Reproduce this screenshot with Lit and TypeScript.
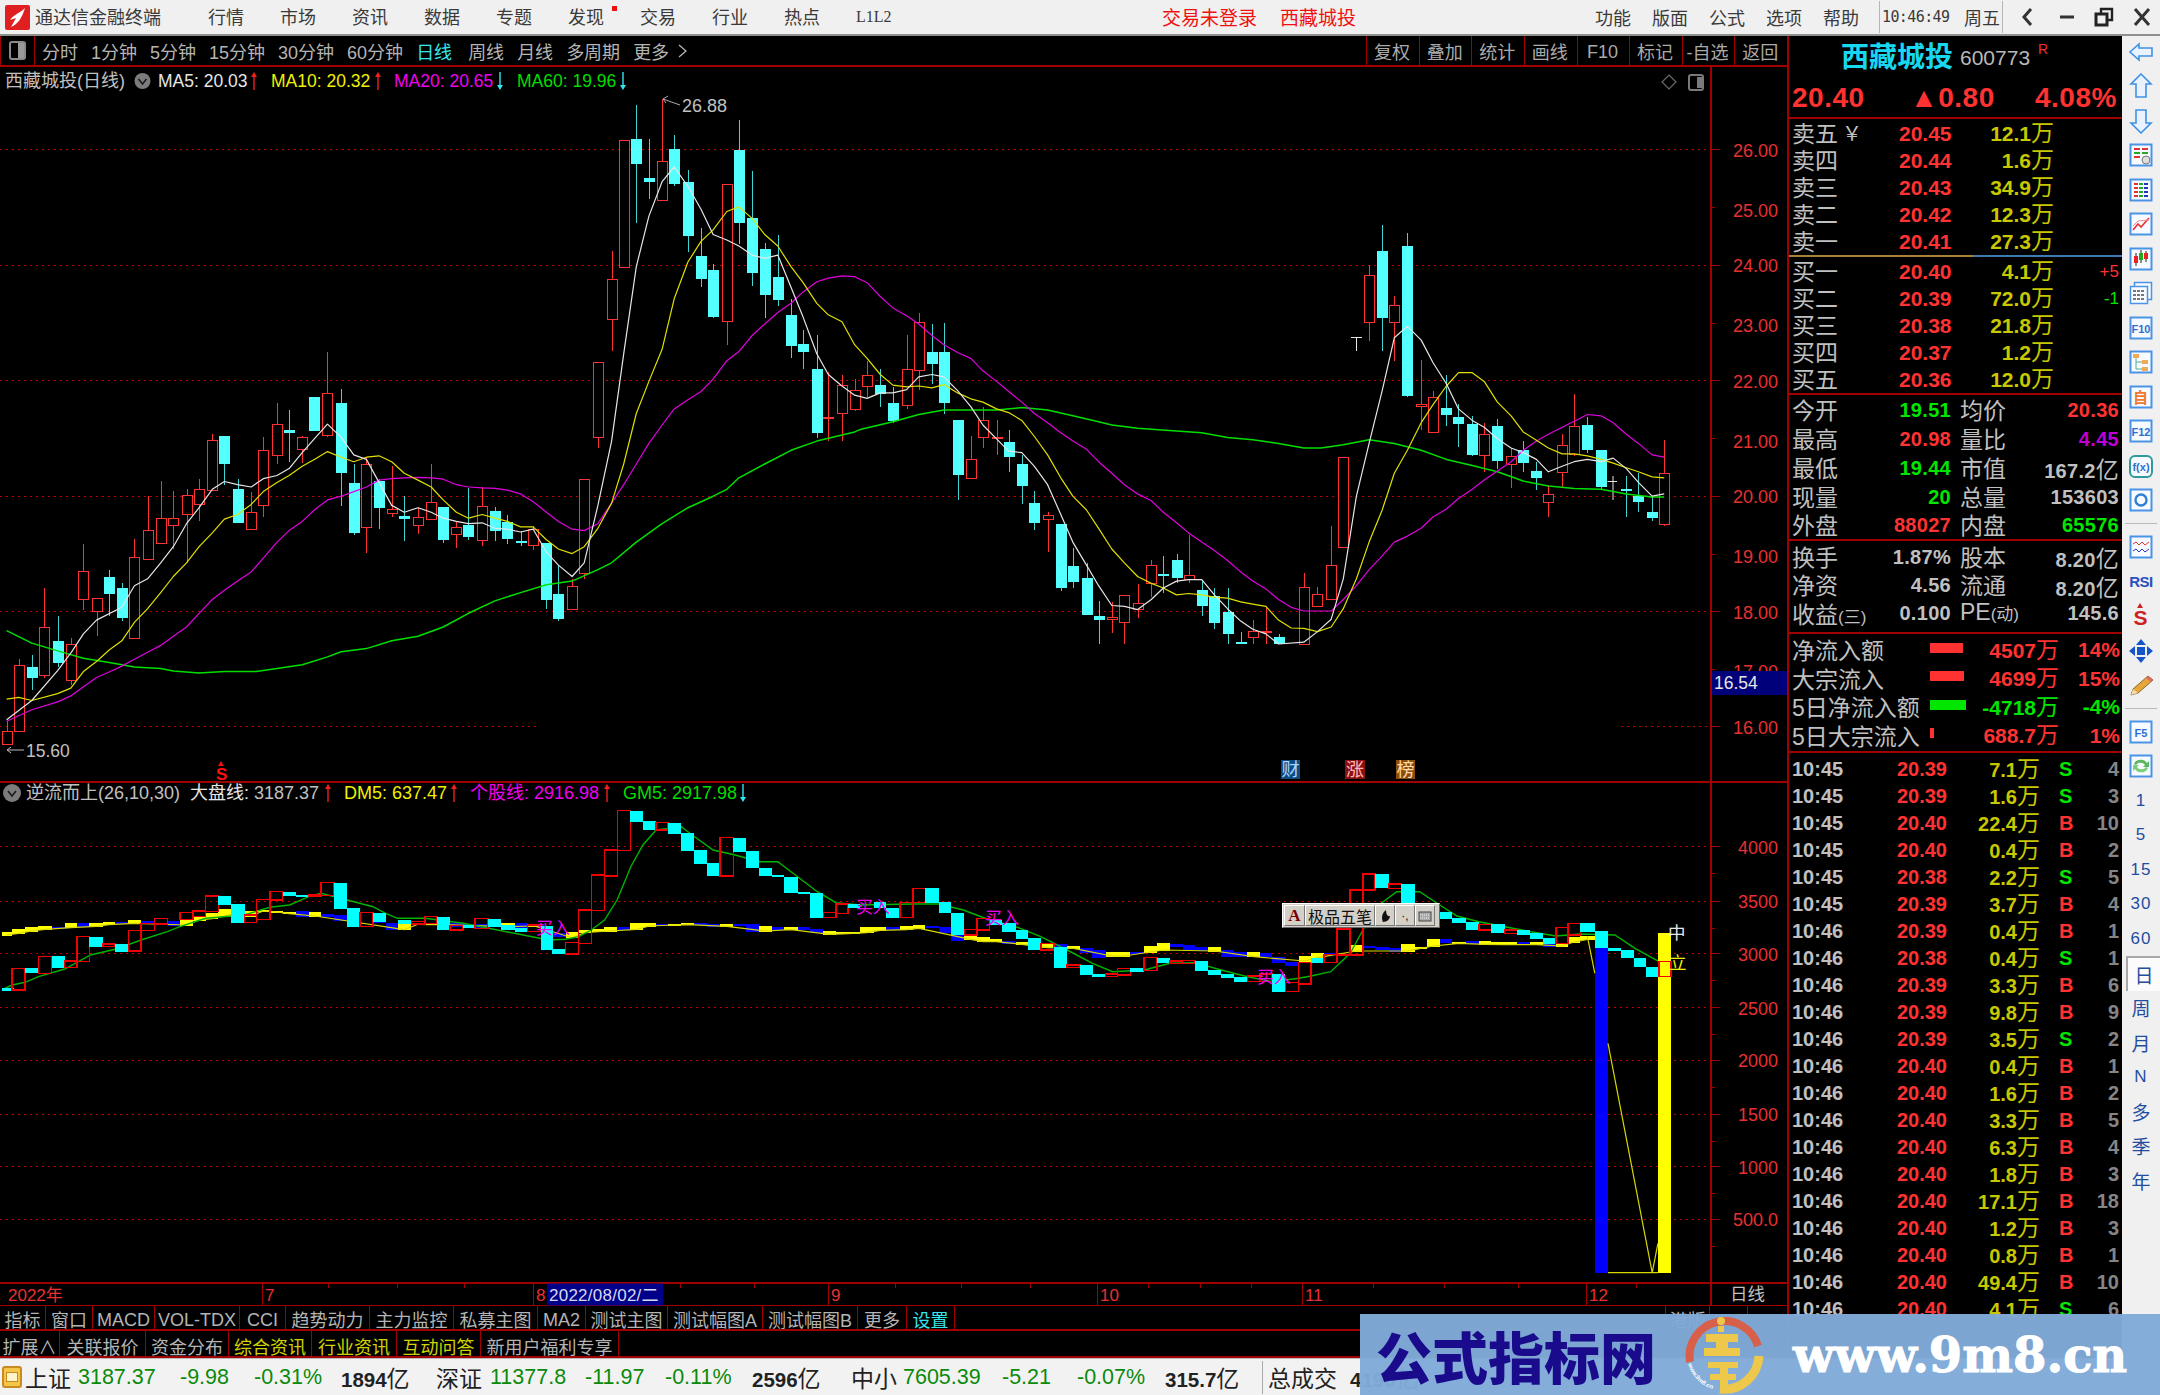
import { LitElement, html, css, svg } from "lit";
import { customElement } from "lit/decorators.js";

type N = number;
// coordinates were read from crops: helpers map them back to page pixels
const X7 = (x: N) => x / 1.823;
const X8 = (x: N) => 860 + x / 1.823;
const Y7 = (y: N) => 60 + y / 2.178;
const X9 = (x: N) => x / 1.823;
const X10 = (x: N) => 860 + x / 1.742;
const Y9 = (y: N) => 780 + y / 3;

const c7: N[][] = [
[12,1,1440,1462,1490,1490],[34,1,1305,1318,1462,1462],[58,0,1295,1323,1346,1372],[81,1,1150,1234,1338,1345],[105,0,1212,1265,1314,1322],[129,1,1258,1273,1352,1362],[152,1,1055,1112,1174,1198],[176,1,1172,1172,1200,1254],[199,0,1110,1125,1163,1210],[222,0,1140,1150,1215,1222],[245,1,1043,1083,1260,1260],[269,1,950,1024,1087,1087],[293,1,918,997,1051,1051],[316,1,938,997,1012,1065],[340,1,935,948,989,1095],[363,1,912,935,968,1005],[387,1,815,828,936,936],[409,0,820,820,882,925],[433,0,912,935,1008,1008],[458,1,940,984,1022,1022],[480,1,822,850,969,995],[505,1,748,793,860,880],[527,0,762,805,812,875],[551,1,820,822,848,878],[573,0,733,733,807,807],[597,1,637,726,818,822],[622,0,716,746,898,972],[645,0,880,922,1030,1035],[668,1,865,880,1018,1073],[691,0,912,918,977,1022],[714,1,885,978,987,995],[737,0,950,994,1000,1048],[762,1,975,995,1012,1032],[786,1,880,962,998,998],[808,0,974,974,1045,1052],[832,1,1005,1017,1033,1062],[854,0,933,1013,1040,1045],[879,1,930,972,1047,1058],[902,0,973,982,1025,1048],[925,0,990,1007,1045,1055],[949,0,1025,1047,1052,1058],[972,1,1015,1022,1057,1068],[996,0,1053,1053,1178,1195],[1018,0,1100,1163,1218,1222],[1043,1,1130,1145,1195,1195],[1065,1,913,913,1118,1130],[1090,1,658,658,822,846],[1115,1,415,476,563,633],[1137,1,174,174,450,450],[1160,0,98,173,228,356],[1183,0,173,258,267,302],[1207,1,85,220,306,306],[1229,0,163,194,270,275],[1254,0,240,265,382,418],[1278,0,366,426,477,495],[1300,0,445,458,560,563],[1325,1,269,269,567,620],[1347,0,130,196,355,400],[1371,0,242,344,463,493],[1394,0,398,412,513,562],[1418,0,382,472,523,535],[1442,0,520,555,623,650],[1464,0,588,618,636,672],[1489,0,598,674,813,823],[1510,1,680,778,780,830],[1535,1,685,708,770,830],[1558,1,695,718,760,765]];
const c8: N[][] = [
[13,1,655,687,710,735],[37,0,672,707,727,755],[60,0,712,748,788,790],[85,1,600,674,753,760],[107,1,550,570,674,718],[131,0,575,635,662,705],[153,0,572,635,745,770],[178,0,785,785,905,958],[202,1,818,868,910,910],[224,1,755,785,822,845],[249,1,785,822,824,860],[271,0,805,833,865,898],[295,0,860,880,928,968],[318,0,938,965,1008,1023],[342,1,985,991,999,1072],[366,0,1010,1010,1150,1157],[388,0,1062,1102,1137,1150],[413,0,1095,1128,1208,1208],[435,0,1178,1210,1218,1272],[459,1,1180,1213,1217,1248],[482,1,1165,1165,1224,1272],[506,1,1142,1182,1195,1215],[531,1,1088,1100,1140,1170],[553,0,1080,1120,1124,1160],[577,0,1077,1088,1128,1140],[599,1,1035,1122,1130,1140],[623,0,1135,1154,1188,1210],[646,0,1150,1167,1225,1240],[670,0,1150,1203,1250,1272],[694,0,1245,1268,1272,1272],[716,1,1220,1243,1257,1272],[740,1,1190,1243,1245,1272],[763,0,1250,1256,1272,1272],[809,1,1118,1148,1272,1272],[834,1,1148,1162,1188,1188],[859,1,1014,1100,1175,1175],[881,1,864,864,1060,1060],[928,1,447,468,570,613],[952,0,360,415,561,633],[974,1,513,534,570,655],[998,0,377,405,732,735],[1023,1,653,749,753,805],[1045,1,722,733,809,812],[1069,0,686,758,773,797],[1091,0,750,777,793,843],[1116,0,775,792,860,863],[1138,1,790,815,860,898],[1162,0,782,798,875,890],[1187,1,845,863,880,933],[1209,0,830,850,878,898],[1233,0,875,895,910,937],[1255,1,925,945,962,995],[1280,1,815,838,896,930],[1302,1,727,798,858,862],[1326,0,778,795,850,855],[1351,0,850,850,930,935],[1397,0,905,935,938,995],[1419,0,900,950,963,985],[1444,0,950,984,996,1005],[1466,1,828,900,1012,1015]];

const ma5 = [[12,1437,58,1395,105,1330,130,1290,152,1250,176,1220,222,1192,245,1145,269,1130,293,1095,316,1060,340,1010,363,975,387,935,409,918,433,925,458,930,480,912,505,905,527,890,551,855,573,825,597,793,622,822,645,860,668,870,691,920,714,970,737,985,762,975,786,985,808,998,832,1005,854,1010,879,1008,902,1020,925,1022,949,1028,972,1022,996,1072,1018,1100,1043,1125,1065,1095,1090,970,1115,830,1137,640,1160,450,1183,340,1207,265,1229,233,1254,275,1278,325,1300,380,1325,392,1347,405,1371,425,1394,432,1418,425,1442,495,1464,560,1489,640,1510,685,1535,710,1558,730],
[13,737,37,725,60,725,85,718,107,690,131,685,153,690,178,720,202,755,224,795,249,825,271,852,295,855,318,885,342,925,366,990,388,1050,413,1100,435,1145,459,1188,482,1190,506,1197,531,1175,553,1150,577,1135,599,1132,623,1132,646,1165,670,1195,694,1222,716,1240,740,1250,763,1272,809,1268,834,1245,859,1218,881,1130,905,950,928,835,952,720,974,605,998,580,1023,610,1045,660,1069,705,1091,760,1116,785,1138,800,1162,825,1187,845,1209,855,1233,870,1255,897,1280,885,1302,875,1326,870,1351,875,1373,867,1397,890,1419,920,1444,950,1466,945]];
const ma10 = [[12,1392,34,1388,58,1395,105,1380,129,1368,152,1332,176,1310,199,1285,222,1265,245,1225,269,1195,293,1160,316,1125,340,1095,363,1060,387,1030,409,1000,433,990,458,968,480,940,505,920,527,905,551,885,573,870,597,853,622,865,645,875,668,865,691,862,714,875,737,900,762,915,786,930,808,958,832,985,854,998,879,990,902,998,925,1005,949,1017,972,1017,996,1045,1018,1065,1043,1075,1065,1060,1090,1020,1115,965,1137,880,1160,770,1183,700,1207,630,1229,520,1254,440,1278,395,1300,370,1325,330,1347,320,1371,345,1394,380,1418,405,1442,450,1464,485,1489,530,1510,555,1535,570,1558,620],
[13,650,37,685,60,708,85,712,107,710,131,714,153,707,178,725,202,738,224,745,249,760,271,768,295,785,318,820,342,860,366,910,388,950,413,980,435,1020,459,1065,482,1095,506,1125,531,1140,553,1150,577,1165,599,1162,623,1165,646,1170,670,1172,694,1180,716,1185,740,1190,763,1220,786,1237,809,1238,834,1245,859,1235,881,1195,905,1130,928,1050,952,980,974,900,998,850,1023,790,1045,750,1069,710,1091,681,1116,681,1138,700,1162,745,1187,775,1209,810,1233,828,1255,845,1280,858,1302,858,1326,862,1351,870,1373,878,1397,888,1419,897,1444,908,1466,910]];
const ma20 = [[12,1440,58,1415,105,1398,129,1385,152,1365,176,1345,199,1333,222,1320,245,1305,269,1290,293,1275,316,1255,340,1235,363,1205,387,1175,409,1155,433,1135,458,1115,480,1085,505,1050,527,1025,551,1005,573,980,597,958,622,950,645,940,668,930,691,915,714,912,737,910,762,909,786,910,808,913,832,925,854,930,879,932,902,933,925,937,949,945,972,962,996,985,1018,1005,1043,1022,1065,1025,1090,1010,1115,965,1137,925,1160,880,1183,835,1207,795,1229,760,1254,740,1278,722,1300,695,1325,655,1347,635,1371,600,1394,575,1418,550,1442,530,1464,505,1489,483,1510,475,1535,470,1558,472],
[13,485,37,515,60,540,85,557,107,575,131,600,153,620,178,637,202,650,224,677,249,700,271,722,295,745,318,770,342,790,366,812,388,830,413,848,435,875,459,900,482,925,506,945,531,960,553,985,577,1008,599,1030,623,1050,646,1068,670,1090,694,1115,716,1135,740,1152,763,1175,786,1192,809,1200,834,1200,859,1200,881,1175,905,1145,928,1110,952,1080,974,1050,998,1037,1023,1020,1045,995,1069,978,1091,955,1116,935,1138,915,1162,895,1187,875,1209,850,1233,830,1255,815,1280,800,1302,787,1326,772,1351,775,1373,790,1397,815,1419,835,1444,860,1466,865]];
const ma60 = [[12,1243,58,1270,105,1287,152,1303,199,1312,245,1322,293,1325,316,1331,363,1335,409,1332,467,1332,505,1325,551,1317,597,1300,622,1289,668,1282,714,1265,762,1255,808,1235,854,1205,902,1178,949,1160,996,1143,1043,1135,1090,1110,1115,1095,1160,1050,1207,1010,1254,975,1300,950,1325,935,1347,910,1394,880,1442,850,1489,830,1558,810],
[0,805,60,788,107,772,153,762,202,762,249,762,295,757,342,762,388,775,435,788,459,795,506,802,577,808,623,812,670,822,716,827,763,835,809,845,840,845,881,838,928,827,974,835,1023,850,1069,870,1116,883,1162,897,1209,917,1255,928,1302,933,1351,935,1397,945,1444,952,1466,952]];

// lower pane: [x1,x2,top,bottom,type] type 1 red outline, 0 cyan solid
const l9: N[][] = [
[22,46,565,630,1],[46,70,563,580,0],[70,94,530,580,1],[94,118,528,565,0],[118,140,543,562,1],[140,163,470,545,1],[163,188,470,500,0],[188,210,492,500,1],[210,234,492,515,0],[234,257,452,513,1],[257,282,430,452,1],[282,305,416,432,1],[328,352,398,418,1],[352,375,393,410,1],[375,398,348,395,1],[397,421,348,375,0],[421,446,371,428,0],[446,468,405,428,1],[468,492,358,418,1],[492,515,335,360,1],[515,539,335,348,0],[539,563,345,352,0],[563,585,345,350,1],[585,609,308,346,1],[609,633,308,388,0],[633,656,385,442,0],[656,680,398,440,1],[680,703,398,425,0],[725,749,420,432,0],[750,775,425,432,1],[775,797,410,430,1],[797,820,410,450,0],[820,844,436,450,1],[844,866,436,445,0],[866,890,416,445,1],[890,914,416,442,0],[914,938,435,450,0],[938,962,445,455,0],[962,986,435,455,1],[986,1009,438,510,0],[1007,1031,507,522,0],[1031,1055,488,522,1],[1055,1078,390,490,1],[1078,1102,285,392,1],[1102,1126,210,288,1],[1126,1149,92,212,1],[1149,1172,92,126,0],[1172,1196,122,150,0],[1196,1218,128,150,1],[1218,1242,128,162,0],[1242,1266,160,212,0],[1266,1289,210,252,0],[1289,1313,250,288,0],[1313,1337,173,288,1],[1337,1360,173,215,0],[1360,1384,213,265,0],[1384,1407,264,288,0],[1407,1430,285,292,0],[1430,1454,290,338,0],[1454,1477,335,342,0],[1477,1501,340,413,0],[1501,1524,398,413,1],[1524,1546,372,400,1],[1546,1568,372,384,0]];
const l10: N[][] = [
[24,46,365,385,0],[46,70,383,415,0],[70,92,367,413,1],[92,114,325,367,1],[114,137,325,370,0],[137,159,365,400,0],[159,182,398,465,0],[182,204,448,465,1],[204,226,415,450,1],[226,248,420,435,0],[248,271,430,455,0],[271,292,450,477,0],[292,315,475,510,0],[315,338,490,510,1],[338,361,500,563,0],[361,383,555,563,1],[383,406,555,585,0],[405,428,582,590,0],[428,449,582,590,1],[449,471,565,585,1],[471,495,565,575,0],[495,517,533,572,1],[517,540,533,550,0],[540,562,543,550,1],[562,584,542,550,1],[584,607,542,572,0],[607,629,570,585,0],[629,652,582,595,0],[652,675,590,605,0],[675,697,588,605,1],[697,718,582,605,1],[718,741,582,635,0],[741,764,607,635,1],[764,786,548,612,1],[786,808,535,550,0],[808,831,524,548,1],[831,854,447,525,1],[854,876,330,525,1],[876,897,282,330,1],[897,921,282,325,0],[921,943,312,325,1],[943,966,312,370,0],[966,988,368,390,0],[988,1010,385,400,0],[1010,1032,397,418,0],[1032,1055,415,428,0],[1055,1078,425,450,0],[1078,1100,433,450,1],[1100,1123,433,458,0],[1123,1145,450,460,1],[1145,1168,450,465,0],[1168,1190,460,478,0],[1190,1212,475,492,0],[1212,1233,443,490,1],[1233,1255,430,465,1],[1255,1280,430,455,0],[1280,1303,452,505,0],[1303,1325,503,513,0],[1325,1348,510,535,0],[1348,1370,533,562,0],[1370,1392,560,590,0],[1392,1412,545,590,1]];
// market strip: [x1,x2,top,bottom,type] type 1 yellow, 0 blue
const b9: N[][] = [
[3,22,456,467,1],[22,46,447,462,1],[46,70,440,455,1],[70,94,437,450,1],[94,118,440,446,0],[118,140,429,445,1],[140,163,429,441,0],[163,187,429,441,1],[187,210,425,436,1],[210,234,425,432,0],[234,257,419,432,1],[257,282,423,430,0],[305,328,422,437,0],[328,352,418,437,1],[352,375,408,422,1],[375,398,398,418,1],[398,421,388,410,1],[421,445,388,400,1],[445,468,392,410,1],[468,492,390,395,1],[492,515,392,398,1],[515,539,395,403,1],[539,563,393,410,0],[563,585,397,410,1],[585,609,401,411,0],[609,633,405,423,0],[680,703,420,428,0],[703,725,430,451,0],[725,749,432,451,1],[749,775,428,435,1],[775,797,430,436,1],[797,820,430,436,1],[820,844,430,440,0],[844,866,433,440,0],[866,890,432,445,0],[890,914,428,440,0],[914,938,428,442,1],[938,962,430,443,0],[962,986,432,440,1],[986,1009,448,458,0],[1009,1031,458,470,0],[1031,1055,455,475,1],[1055,1078,450,460,1],[1078,1102,447,457,1],[1102,1125,442,455,1],[1125,1149,442,450,0],[1149,1172,428,450,1],[1172,1196,430,440,1],[1196,1218,433,438,0],[1218,1242,432,437,1],[1242,1266,428,436,1],[1266,1289,428,436,0],[1289,1313,432,441,0],[1313,1337,432,441,1],[1337,1360,433,438,0],[1360,1384,433,455,0],[1384,1407,437,455,1],[1407,1430,440,450,0],[1430,1454,442,451,1],[1454,1477,442,450,0],[1477,1501,447,460,0],[1501,1524,452,465,1],[1524,1568,455,463,1]];
const b10: N[][] = [
[0,24,441,460,1],[24,46,441,453,1],[46,70,442,450,0],[70,92,438,451,1],[92,114,436,447,1],[114,137,437,445,0],[137,159,442,460,0],[159,182,465,483,0],[182,204,465,480,1],[204,226,472,487,1],[226,248,478,487,1],[248,271,482,492,0],[271,292,485,495,1],[292,315,487,495,0],[315,338,490,505,1],[338,361,492,510,0],[361,383,497,507,1],[383,406,505,520,0],[405,428,510,533,0],[428,449,515,530,1],[449,471,515,530,1],[471,495,517,523,0],[495,517,497,518,1],[517,540,490,512,1],[540,562,492,502,0],[562,584,495,510,0],[584,607,502,512,0],[607,629,502,515,1],[629,652,510,530,0],[652,675,515,530,0],[675,697,517,532,1],[697,718,519,532,0],[718,741,530,550,0],[741,764,545,558,0],[764,786,528,545,1],[786,808,518,535,1],[808,831,520,525,0],[854,876,495,515,1],[876,897,497,505,0],[897,921,500,510,0],[921,943,505,515,0],[943,966,492,515,1],[966,988,500,507,1],[988,1010,478,500,1],[1010,1032,478,490,0],[1032,1055,485,492,1],[1055,1078,482,492,0],[1078,1100,482,495,1],[1100,1145,487,496,1],[1145,1168,487,496,0],[1168,1190,487,496,1],[1190,1212,490,500,0],[1212,1233,490,500,1],[1233,1255,472,488,1],[1255,1280,468,480,1]];
const g9 = [5,628,22,615,46,607,70,590,118,567,165,525,210,508,257,480,305,455,328,440,375,415,445,405,492,382,528,375,563,350,585,340,633,360,680,380,703,400,725,415,775,415,845,430,1000,480,1031,478,1055,470,1078,450,1102,420,1125,360,1150,260,1172,195,1196,150,1242,140,1266,170,1300,210,1340,225,1384,245,1418,245,1454,290,1490,335,1524,368];
const g10 = [0,375,92,372,137,372,180,390,226,420,271,440,315,470,361,510,405,550,440,575,495,570,540,550,584,548,629,570,675,590,718,605,764,595,786,588,820,575,854,520,876,450,900,380,935,335,975,335,1010,375,1040,408,1078,425,1123,440,1168,455,1212,468,1255,462,1315,465,1350,505,1392,545];

const pts = (a: N[], fx: (n: N) => N, fy: (n: N) => N) => {
  const out: string[] = [];
  for (let i = 0; i < a.length; i += 2) out.push(`${fx(a[i]).toFixed(1)},${fy(a[i + 1]).toFixed(1)}`);
  return out.join(" ");
};
const maLine = (s: N[][], cls: string) => svg`<polyline class=${cls} points=${pts(s[0], X7, Y7) + " " + pts(s[1], X8, Y7)}></polyline>`;

const candle = (c: N[], fx: (n: N) => N) => {
  const x = Math.round(fx(c[0]));
  const t = Y7(c[3]), b = Y7(c[4]);
  if (c[1]) return svg`<line class="wick-r" x1=${x + 0.5} x2=${x + 0.5} y1=${Y7(c[2])} y2=${Y7(c[5])}></line><rect class="body-r" x=${x - 4.5} y=${Math.round(t) + 0.5} width="10" height=${Math.max(1, Math.round(b - t))}></rect>`;
  return svg`<line class="wick-c" x1=${x + 0.5} x2=${x + 0.5} y1=${Y7(c[2])} y2=${Y7(c[5])}></line><rect class="body-c" x=${x - 5} y=${Math.round(t)} width="11" height=${Math.max(2, Math.round(b - t))}></rect>`;
};
const block = (c: N[], fx: (n: N) => N, cls: string) => svg`<rect class=${cls} x=${fx(c[0])} y=${Y9(c[2])} width=${fx(c[1]) - fx(c[0])} height=${(c[3] - c[2]) / 3}></rect>`;
const arrow = (x: N, y: N, up: boolean, col: string) => up
  ? svg`<path d="M${x} ${y + 9}V${y - 7}" stroke=${col} stroke-width="1.4" fill="none"></path><path d="M${x - 3} ${y - 4}L${x} ${y - 9}L${x + 3} ${y - 4}Z" fill=${col}></path>`
  : svg`<path d="M${x} ${y - 9}V${y + 7}" stroke=${col} stroke-width="1.4" fill="none"></path><path d="M${x - 3} ${y + 4}L${x} ${y + 9}L${x + 3} ${y + 4}Z" fill=${col}></path>`;
const chevron = (x: N, y: N, r: N) => svg`<circle cx=${x} cy=${y} r=${r} fill="#7c7c7c"></circle><path d="M${x - 4} ${y - 2}L${x} ${y + 3}L${x + 4} ${y - 2}" stroke="#1a1a1a" stroke-width="1.6" fill="none"></path>`;

const topAxis: [string, N, boolean][] = [["26.00",149.5,true],["25.00",207.5,false],["24.00",265,true],["23.00",323,false],["22.00",380.5,true],["21.00",438.5,false],["20.00",496,true],["19.00",554,false],["18.00",611.5,true],["17.00",669,false],["16.00",726.7,true]];
const lowAxis: [string, N][] = [["4000",846.7],["3500",901],["3000",953.5],["2500",1007.5],["2000",1060],["1500",1114],["1000",1166.7],["500.0",1219]];
const dateTicks = [328,397,464,680,754,895,961,1030,1148,1200,1251,1373,1444,1518,1636];
const dateLabels: [string, N][] = [["7",262],["8",533],["9",828],["10",1097],["11",1302],["12",1586]];

const tabs1: [string, N, string?][] = [["指标",46],["窗口",47],["MACD",62],["VOL-TDX",85],["CCI",46],["趋势动力",84],["主力监控",84],["私募主图",84],["MA2",48],["测试主图",82],["测试幅图A",95],["测试幅图B",95],["更多",49],["设置",48,"cy"],["",711],["港版",44],["",38]];
const tabs2: [string, N, string?][] = [["扩展∧",60],["关联报价",86],["资金分布",83],["综合资讯",83,"ye"],["行业资讯",85,"ye"],["互动问答",84,"ye"],["新用户福利专享",138]];

const sells = [["卖五","20.45","12.1"],["卖四","20.44","1.6"],["卖三","20.43","34.9"],["卖二","20.42","12.3"],["卖一","20.41","27.3"]];
const buys = [["买一","20.40","4.1","+5"],["买二","20.39","72.0","-1"],["买三","20.38","21.8",""],["买四","20.37","1.2",""],["买五","20.36","12.0",""]];
const stats1 = [["今开","19.51","gr","均价","20.36","re"],["最高","20.98","re","量比","4.45","pu"],["最低","19.44","gr","市值","167.2亿","wh"],["现量","20","gr","总量","153603","wh"],["外盘","88027","re","内盘","65576","gr"]];
const stats2 = [["换手","1.87%","wh","股本","8.20亿","wh"],["净资","4.56","wh","流通","8.20亿","wh"],["收益(三)","0.100","wh","PE(动)","145.6","wh"]];
const flow: [string, N, string, string, string][] = [["净流入额",33,"4507","14%","re"],["大宗流入",34,"4699","15%","re"],["5日净流入额",36,"-4718","-4%","gr"],["5日大宗流入",4,"688.7","1%","re"]];
const trades: [string, string, string, string, string][] = [["10:45","20.39","7.1","S","4"],["10:45","20.39","1.6","S","3"],["10:45","20.40","22.4","B","10"],["10:45","20.40","0.4","B","2"],["10:45","20.38","2.2","S","5"],["10:45","20.39","3.7","B","4"],["10:46","20.39","0.4","B","1"],["10:46","20.38","0.4","S","1"],["10:46","20.39","3.3","B","6"],["10:46","20.39","9.8","B","9"],["10:46","20.39","3.5","S","2"],["10:46","20.40","0.4","B","1"],["10:46","20.40","1.6","B","2"],["10:46","20.40","3.3","B","5"],["10:46","20.40","6.3","B","4"],["10:46","20.40","1.8","B","3"],["10:46","20.40","17.1","B","18"],["10:46","20.40","1.2","B","3"],["10:46","20.40","0.8","B","1"],["10:46","20.40","49.4","B","10"],["10:46","20.40","4.1","S","6"]];
const statusItems: [string, N, string][] = [["上证",25,"nm"],["3187.37",78,"up"],["-9.98",180,"up"],["-0.31%",254,"up"],["1894亿",341,"vol"],["深证",436,"nm"],["11377.8",490,"up"],["-11.97",585,"up"],["-0.11%",665,"up"],["2596亿",752,"vol"],["中小",851,"nm"],["7605.39",903,"up"],["-5.21",1002,"up"],["-0.07%",1077,"up"],["315.7亿",1165,"vol"],["",1262,"sep"],["总成交",1268,"nm"],["4190亿",1350,"vol"]];

const frame = (inner: unknown) => svg`<rect x="2.5" y="2.5" width="21" height="21" fill="#f7fbff" stroke="#4a94e6" stroke-width="2"></rect>${inner}`;
const icons: unknown[] = [
  svg`<path d="M2 13L11 5V9H24V17H11V21Z" fill="#e8f3ff" stroke="#3f91e4" stroke-width="1.6"></path>`,
  svg`<path d="M13 1L23 11H18V24H8V11H3Z" fill="#e8f3ff" stroke="#3f91e4" stroke-width="1.6"></path>`,
  svg`<path d="M13 25L23 15H18V2H8V15H3Z" fill="#e8f3ff" stroke="#3f91e4" stroke-width="1.6"></path>`,
  frame(svg`<path d="M6 7H12M14 7H20" stroke="#d33" stroke-width="2"></path><path d="M6 11H12M14 11H20" stroke="#2a2" stroke-width="2"></path><path d="M6 15H12" stroke="#d33" stroke-width="2"></path><circle cx="18" cy="18" r="4" fill="#ddd" stroke="#777"></circle>`),
  frame(svg`<path d="M6 7H10M6 11H10M6 15H10M6 19H10" stroke="#d33" stroke-width="2"></path><path d="M11 7H15M11 11H15M11 15H15M11 19H15" stroke="#2a2" stroke-width="2"></path><path d="M16 7H20M16 11H20M16 15H20M16 19H20" stroke="#23c" stroke-width="2"></path>`),
  frame(svg`<path d="M5 19L10 13L13 16L21 7" stroke="#e33" stroke-width="1.6" fill="none"></path><path d="M5 15L10 10L21 9" stroke="#f88" stroke-width="1" fill="none"></path>`),
  frame(svg`<path d="M8 7V20M13 4V17M18 5V16" stroke="#222" stroke-width="1"></path><rect x="6" y="10" width="4" height="7" fill="#e22"></rect><rect x="11" y="7" width="4" height="7" fill="#2a2"></rect><rect x="16" y="7" width="4" height="6" fill="#e22"></rect>`),
  svg`<rect x="6.5" y="2.5" width="17" height="17" fill="#f7fbff" stroke="#4a94e6" stroke-width="1.5"></rect><rect x="2.5" y="6.5" width="17" height="17" fill="#f7fbff" stroke="#4a94e6" stroke-width="1.5"></rect><path d="M5 11H17M5 15H17M5 19H17" stroke="#777" stroke-dasharray="3 1" stroke-width="2"></path>`,
  frame(svg`<text class="ic" x="13" y="18" text-anchor="middle">F10</text>`),
  frame(svg`<path d="M8 7V20H14M8 13H14" stroke="#5a9" fill="none"></path><rect x="5" y="5" width="6" height="4" fill="#ea5"></rect><rect x="14" y="11" width="6" height="4" fill="#ea5"></rect><rect x="14" y="18" width="6" height="4" fill="#ea5"></rect>`),
  frame(svg`<text class="ic-o" x="13" y="19" text-anchor="middle">自</text>`),
  frame(svg`<text class="ic" x="13" y="18" text-anchor="middle">F12</text>`),
  svg`<rect x="2" y="3" width="22" height="21" rx="5" fill="#f7fbff" stroke="#2f9a9a" stroke-width="2"></rect><text class="ic" x="13" y="18" text-anchor="middle">f(x)</text>`,
  frame(svg`<circle cx="13" cy="13" r="5.5" fill="none" stroke="#2e7fd6" stroke-width="2.4"></circle>`),
  null,
  frame(svg`<path d="M5 10L8 8L11 11L14 8L17 11L21 8" stroke="#e33" fill="none"></path><path d="M5 17L8 15L11 18L14 15L17 18L21 15" stroke="#33c" fill="none"></path>`),
  svg`<text class="rsi" x="13" y="18" text-anchor="middle">RSI</text>`,
  svg`<path d="M12 0L15 5H9Z" fill="#c22"></path><text class="ss" x="13" y="22" text-anchor="middle">S</text>`,
  svg`<path d="M13 1L18 7H8ZM13 25L18 19H8ZM1 13L7 8V18ZM25 13L19 8V18Z" fill="#1555c8"></path><rect x="9" y="9" width="8" height="8" fill="#1555c8"></rect>`,
  svg`<path d="M3 23L5 17L20 4L25 8L10 21Z" fill="#e7a63a" stroke="#8a6b30"></path><path d="M3 23L5 17L10 21Z" fill="#f2dcb0"></path><path d="M20 4L25 8L23 10L18 6Z" fill="#d66"></path>`,
  null,
  frame(svg`<text class="ic" x="13" y="18" text-anchor="middle">F5</text>`),
  frame(svg`<path d="M6 11A7 6 0 0 1 19 10L21 8V14H15L17 12A5 4 0 0 0 8 12Z" fill="#5cb85c"></path><path d="M20 15A7 6 0 0 1 7 16L5 18V12H11L9 14A5 4 0 0 0 18 14Z" fill="#7ccf7c"></path>`),
];
const sideLabels = ["1","5","15","30","60","日","周","月","N","多","季","年"];

// "收益(三)" → the bracketed part is squeezed in the terminal's font
const key = (t: string) => {
  const m = t.match(/^(.*?)(\(.\))$/);
  return m ? html`${m[1]}<small>${m[2]}</small>` : t;
};
const value = (t: string) => (t.endsWith("亿") ? html`${t.slice(0, -1)}<span class="wan">亿</span>` : t);

@customElement("app-root")
export class AppRoot extends LitElement {
  static styles = css`
    :host { display: block; width: 2160px; height: 1395px; position: relative; overflow: hidden; background: #000;
      font-family: "Liberation Sans", "Noto Sans CJK SC", sans-serif; color: #c0c0c0; }
    .app { display: flex; flex-direction: column; height: 1395px; }

    .menubar { height: 34px; flex: none; display: flex; align-items: center; background: #f0f0f0; border-bottom: 2px solid #8f8f8f; color: #3a3a3a; font-size: 18px; }
    .logo { margin-left: 5px; width: 25px; height: 25px; flex: none; }
    .brand { margin-left: 5px; width: 127px; white-space: nowrap; padding-bottom: 2px; }
    .nav { margin-left: 46px; display: flex; gap: 36px; width: 683px; align-items: center; padding-bottom: 2px; }
    .nav span { position: relative; white-space: nowrap; }
    .nav .lat { font-size: 16px; font-family: "Liberation Serif", serif; padding-top: 2px; }
    .dot { position: absolute; right: -13px; top: 3px; width: 5px; height: 5px; background: #f01010; }
    .alert { color: #f01010; font-size: 19px; white-space: nowrap; padding-bottom: 1px; }
    .alert.first { margin-left: 271px; }
    .alert.second { margin-left: 23px; }
    .menu-right { margin-left: auto; display: flex; align-items: center; height: 34px; margin-right: 6px; }
    .fn { display: flex; gap: 21px; }
    .clock { margin-left: 20px; border-left: 1px solid #b5b5b5; border-right: 1px solid #b5b5b5; height: 32px; width: 124px; display: flex; align-items: center; gap: 11px; padding-left: 2px; box-sizing: border-box; white-space: nowrap; }
    .clock .time { font-family: "DejaVu Sans Mono", monospace; font-size: 15px; width: 71px; letter-spacing: -0.6px; }
    .winbtn { display: flex; margin-left: 13px; gap: 14px; }
    .winbtn svg { display: block; width: 24px; height: 24px; }

    .body { flex: 1; display: flex; min-height: 0; }
    .left { width: 1787px; flex: none; display: flex; flex-direction: column; }
    .toolbar { height: 31px; flex: none; box-sizing: border-box; border-bottom: 2px solid #a00000; display: flex; align-items: center; font-size: 18px; color: #b4b4b4; }
    .tg { width: 35px; height: 29px; box-sizing: border-box; border-left: 1px solid #a00000; border-right: 1px solid #a00000; display: flex; align-items: center; justify-content: center; flex: none; margin-right: 7px; }
    .tg i { display: block; width: 13px; height: 15px; border: 2px solid #8a8a8a; border-radius: 3px; background: linear-gradient(90deg, #000 55%, #9a9a9a 55%); }
    .periods { display: flex; gap: 13px; white-space: nowrap; align-items: center; }
    .periods .on { color: #35e6ea; margin-right: 3px; }
    .periods svg { width: 12px; height: 18px; margin-left: -6px; }
    .tools { margin-left: auto; display: flex; height: 29px; }
    .tools span { width: 52.6px; box-sizing: border-box; border-left: 1px solid #a00000; display: flex; align-items: center; justify-content: center; white-space: nowrap; color: #aaa; padding-right: 2px; }
    .tools .lat { padding-top: 3px; }

    svg.chart { display: block; width: 1787px; height: 1239px; flex: none; font-size: 18px; background: #000; }
    svg.chart text { dominant-baseline: central; font-size: 17.5px; fill: #c0c0c0; }
    svg.chart .lg18 { font-size: 18px; }
    svg.chart .f-w { fill: #e6e6e6; }
    svg.chart .f-y { fill: #f0f000; }
    svg.chart .f-m { fill: #f000f0; }
    svg.chart .f-g { fill: #00dd00; }
    svg.chart .ax { font-size: 18px; fill: #e83030; text-anchor: end; }
    svg.chart .date { font-size: 17px; fill: #e83030; }
    svg.chart .dsel { font-size: 17px; fill: #d8d8f0; letter-spacing: 0.25px; }
    svg.chart .buy { fill: #f000f0; font-size: 17px; }
    svg.chart .b1 { font-size: 18px; fill: #a8d4ff; }
    svg.chart .b2 { font-size: 18px; fill: #ffb8b8; }
    svg.chart .b3 { font-size: 18px; fill: #ffdca8; }
    svg.chart .ss16 { fill: #ff1010; font-weight: bold; font-size: 17px; }
    .grid { stroke: #c00000; stroke-width: 1; stroke-dasharray: 2 4; shape-rendering: crispEdges; }
    .axis { stroke: #a00000; stroke-width: 2; shape-rendering: crispEdges; fill: none; }
    .tick { stroke: #a00000; stroke-width: 1; shape-rendering: crispEdges; }
    .wick-r { stroke: #ff3232; stroke-width: 1; shape-rendering: crispEdges; }
    .wick-c { stroke: #3fd6d6; stroke-width: 1; shape-rendering: crispEdges; }
    .body-r { fill: #000; stroke: #ff3232; stroke-width: 1; shape-rendering: crispEdges; }
    .body-c { fill: #54ffff; shape-rendering: crispEdges; }
    .ma { fill: none; stroke-width: 1.2; stroke-linejoin: round; }
    .ma5 { stroke: #e6e6e6; }
    .ma10 { stroke: #e0e000; }
    .ma20 { stroke: #e000e0; }
    .ma60 { stroke: #00e000; stroke-width: 1.5; }
    .lr { fill: none; stroke: #f00000; stroke-width: 1.5; shape-rendering: crispEdges; }
    .lc { fill: #00ffff; shape-rendering: crispEdges; }
    .ly { fill: #ffff00; shape-rendering: crispEdges; }
    .lb { fill: #0000ff; shape-rendering: crispEdges; }
    .lg { fill: none; stroke: #00b400; stroke-width: 1.4; }
    .thin-y { fill: none; stroke: #d8d800; stroke-width: 1.2; }

    .tabs { flex: none; display: flex; box-sizing: border-box; border-bottom: 2px solid #a00000; font-size: 18px; color: #b4b4b4; }
    .tabs.r1 { height: 25px; }
    .tabs.r2 { height: 27px; }
    .tabs span { box-sizing: border-box; border-right: 1px solid #a00000; display: flex; align-items: center; justify-content: center; white-space: nowrap; flex: none; padding-top: 3px; }
    .tabs.r2 span { padding-top: 4px; }
    .tabs span.lat { padding-top: 6px; }
    .tabs .cy { color: #35e6ea; }
    .tabs .ye { color: #d2d200; }

    .panel { width: 335px; flex: none; box-sizing: border-box; border-left: 2px solid #a00000; overflow: hidden; display: flex; flex-direction: column; }
    .title { height: 38px; flex: none; display: flex; align-items: center; padding-left: 52px; white-space: nowrap; }
    .title b { color: #17d8f0; font-size: 28px; font-weight: 700; }
    .title .code { font-size: 21px; color: #b8b8b8; margin-left: 7px; margin-top: 6px; }
    .title sup { color: #e83030; font-size: 14px; margin-left: 8px; margin-top: -12px; font-weight: 400; line-height: 1; }
    .quote { height: 45px; flex: none; box-sizing: border-box; border-bottom: 2px solid #a00000; display: grid; grid-template-columns: 118px 125px 85px; align-items: center; padding: 4px 0 0 3px; color: #ff3232; font-weight: 700; font-size: 28px; white-space: nowrap; letter-spacing: 0.5px; }
    .book { flex: none; padding-left: 3px; padding-top: 1px; }
    .book.a { border-bottom: 2px solid; border-image: linear-gradient(90deg, #a8803a 0 184px, #3c7ab0 184px 100%) 1; }
    .book.b { border-bottom: 2px solid #a00000; }
    .orow { height: 27px; display: grid; grid-template-columns: 107px 53px 102px 65px; grid-template-rows: 27px; align-items: center; white-space: nowrap; }
    .orow .lb2 { font-size: 23px; color: #c0c0c0; display: flex; align-items: center; padding-bottom: 3px; }
    .orow .yen { font-size: 20px; margin-left: 4px; }
    .orow .p { font-size: 21px; color: #ff3232; font-weight: 700; }
    .orow .v, .tv { color: #c8c800; text-align: right; font-weight: 700; }
    .orow .v { font-size: 21px; padding-bottom: 5px; }
    .wan { font-size: 23px; font-weight: 400; }
    .orow .d { font-size: 17px; text-align: right; }
    .sec { flex: none; box-sizing: border-box; border-bottom: 2px solid #a00000; padding-left: 3px; }
    .sec.s2 { padding-top: 1px; padding-bottom: 5px; }
    .sec.s3 { padding-top: 2.5px; padding-bottom: 0.5px; }
    .sec.s3 + .trow { margin-top: 3px; }
    .srow { display: flex; gap: 9px; white-space: nowrap; }
    .srow.big { height: 28.75px; }
    .srow.mid { height: 28.3px; }
    .srow > div { width: 159px; display: flex; justify-content: space-between; align-items: center; }
    .srow .k { font-size: 23px; color: #c0c0c0; }
    .srow small { font-size: 17px; }
    .srow .val { font-size: 20px; font-weight: 700; letter-spacing: 0.3px; padding-top: 3px; }
    .re { color: #ff3232; }
    .gr { color: #00e600; }
    .pu { color: #c000d0; }
    .wh { color: #c0c0c0; }
    .frow { height: 28.5px; display: grid; grid-template-columns: 138px 44px 85px 61px; grid-template-rows: 28.5px; align-items: center; white-space: nowrap; }
    .frow .k { font-size: 23px; color: #c0c0c0; padding-bottom: 2px; }
    .frow .cell { padding-bottom: 5px; }
    .frow .bar { height: 10px; }
    .frow .bar.re { background: #ff3232; }
    .frow .bar.gr { background: #00e600; }
    .frow .r { text-align: right; font-size: 21px; font-weight: 700; }
    .frow .r.mv { padding-bottom: 5px; }
    .trow { height: 27px; flex: none; display: grid; grid-template-columns: 60px 95px 93px 19px 20px 40px; grid-template-rows: 27px; align-items: center; padding-left: 3px; white-space: nowrap; font-size: 20px; font-weight: 700; }
    .trow .tt { color: #c0c0c0; }
    .trow .tp { color: #ff3232; text-align: right; }
    .trow .tv { padding-bottom: 5px; }
    .trow .ct { color: #858585; text-align: right; }

    .side { width: 38px; flex: none; background: #f0f0f0; display: flex; flex-direction: column; align-items: center; overflow: hidden; }
    .sitem { height: 34.5px; flex: none; display: flex; align-items: center; justify-content: center; width: 100%; color: #1f4ea1; font-size: 17px; letter-spacing: 1px; }
    .side .sitem:first-child { margin-top: -1.5px; }
    .sitem svg { width: 26px; height: 26px; }
    .sitem .ic { font: 700 11px "Liberation Sans", sans-serif; fill: #2f6fd0; letter-spacing: 0; }
    .sitem .ic-o { font: 700 15px "Noto Sans CJK SC", sans-serif; fill: #f07830; }
    .sitem .rsi { font: 700 15px "Liberation Sans", sans-serif; fill: #2a4fc0; letter-spacing: -0.5px; }
    .sitem .ss { font: 700 21px "Liberation Sans", sans-serif; fill: #c22; }
    .sitem.cjk { font-size: 19px; letter-spacing: 0; }
    .sitem.sel { background: #fbfbfb; box-sizing: border-box; border-left: 2px solid #a8a8a8; border-top: 2px solid #a8a8a8; margin-left: 4px; width: 34px; }
    .ssep { height: 12.25px; flex: none; display: flex; align-items: center; width: 32px; }
    .ssep i { display: block; width: 100%; height: 1px; background: #b8b8b8; }

    .status { height: 37px; flex: none; background: #f2f2f2; display: flex; align-items: center; position: relative; white-space: nowrap; border-top: 1px solid #bbb; box-sizing: border-box; }
    .status .gold { width: 20px; height: 22px; margin-left: 2px; margin-right: 3px; flex: none; box-sizing: border-box; background: #f4c64a; border: 2px solid #c98a20; border-radius: 3px; display: flex; align-items: center; justify-content: center; }
    .status .gold i { display: block; width: 10px; height: 8px; background: #fff4c8; border: 1px solid #c98a20; }
    .status span { flex: none; }
    .status .nm { font-size: 23px; color: #222; }
    .status .up { font-size: 21.5px; color: #0a8a0a; }
    .status .vol { font-size: 20.5px; font-weight: 700; color: #222; }
    .status .vol em { font-style: normal; font-weight: 400; font-size: 23px; }
    .status .sep i { display: block; width: 1px; height: 33px; background: #aaa; }

    .ime { position: absolute; left: 1282px; top: 903px; width: 158px; height: 25px; box-sizing: border-box; background: #d4d0c8; border: 1px solid; border-color: #fff #666 #666 #fff; display: flex; align-items: stretch; padding: 1px 1px; color: #111; font-size: 16px; white-space: nowrap; }
    .ime span { display: flex; align-items: center; justify-content: center; box-sizing: border-box; border: 1px solid; border-color: #fff #777 #777 #fff; }
    .ime .a { width: 21px; color: #7a0000; font-family: "Liberation Serif", serif; font-weight: 700; font-size: 17px; }
    .ime .w { width: 70px; font-size: 16px; }
    .ime .m, .ime .d, .ime .k { width: 20px; font-size: 12px; }
    .ime svg { width: 14px; height: 14px; }

    .wm { position: absolute; left: 1360px; top: 1314px; width: 800px; height: 81px; background: rgba(128, 170, 216, 0.97); display: flex; align-items: center; white-space: nowrap; }
    .wm .cn { margin-left: 16px; font: 900 56px "Noto Sans CJK SC", sans-serif; color: #1a0a8c; letter-spacing: 0; line-height: 1; }
    .wm svg { margin-left: 27px; width: 82px; height: 81px; flex: none; }
    .wm svg text { font: 700 6px "Liberation Sans", sans-serif; fill: #fff; }
    .wm .url { margin-left: 28px; font: 700 48px "DejaVu Serif", serif; color: #fff; line-height: 1; -webkit-text-stroke: 1px #fff; }
  `;

  private chart() {
    const grids = [149.5, 265, 380.5, 496, 611.4];
    const lgrids = [846.7, 901, 953.5, 1007.5, 1060, 1114, 1166.7, 1219];
    const yellow = [...b9.filter((b) => b[4]).flatMap((b) => [X9((b[0] + b[1]) / 2), Y9(b[3] - 2)]), ...b10.filter((b) => b[4]).flatMap((b) => [X10((b[0] + b[1]) / 2), Y9(b[3] - 2)])];
    return svg`
      <svg class="chart" viewBox="0 67 1787 1239">
        ${grids.map((y) => svg`<line class="grid" x1="0" x2="1710" y1=${y} y2=${y}></line>`)}
        <line class="grid" x1="0" x2="537" y1="726.7" y2="726.7"></line>
        <line class="grid" x1="1621" x2="1710" y1="726.7" y2="726.7"></line>
        ${lgrids.map((y) => svg`<line class="grid" x1="0" x2="1710" y1=${y} y2=${y}></line>`)}

        ${c7.map((c) => candle(c, X7))}
        ${c8.map((c) => candle(c, X8))}
        <path d="M1351 337.5H1362M1356.5 337.5V351" stroke="#e6e6e6" fill="none"></path>
        <path d="M1607.5 481.5H1617M1613 476V500" stroke="#e6e6e6" fill="none"></path>
        ${maLine(ma60, "ma ma60")}${maLine(ma20, "ma ma20")}${maLine(ma10, "ma ma10")}${maLine(ma5, "ma ma5")}

        <text class="lg18" x="5" y="81">西藏城投(日线)</text>
        ${chevron(142.5, 81, 8)}
        <text class="f-w" x="158" y="81">MA5: 20.03</text>${arrow(254, 81, true, "#f02020")}
        <text class="f-y" x="271" y="81">MA10: 20.32</text>${arrow(378, 81, true, "#f02020")}
        <text class="f-m" x="394" y="81">MA20: 20.65</text>${arrow(500, 81, false, "#30e6f0")}
        <text class="f-g" x="517" y="81">MA60: 19.96</text>${arrow(623, 81, false, "#30e6f0")}
        <path d="M1669 75L1676 82L1669 89L1662 82Z" fill="none" stroke="#6a6a6a" stroke-width="1.2"></path>
        <rect x="1689" y="75" width="14" height="15" rx="2" fill="#000" stroke="#7a7a7a" stroke-width="2"></rect>
        <rect x="1697" y="77" width="5" height="11" fill="#7a7a7a"></rect>
        <path d="M663 99L680 105M663 99L668 96M663 99L666 103" stroke="#aaa" fill="none"></path>
        <text class="lg18" x="682" y="106">26.88</text>
        <path d="M7 750H24M7 750L11 747M7 750L11 753" stroke="#bbb" fill="none"></path>
        <text x="26" y="751">15.60</text>
        <path d="M221 761L224 766H218Z" fill="#f01010"></path>
        <text class="ss16" x="216" y="774">S</text>
        <rect x="1281" y="760" width="19" height="19" fill="#0f4a80"></rect><text class="b1" x="1281.5" y="769.5">财</text>
        <rect x="1345" y="760" width="20" height="19" fill="#8b0f0f"></rect><text class="b2" x="1346" y="769.5">涨</text>
        <rect x="1396" y="760" width="19" height="19" fill="#8a4d10"></rect><text class="b3" x="1396.5" y="769.5">榜</text>

        ${b9.map((b) => block(b, X9, b[4] ? "ly" : "lb"))}
        ${b10.map((b) => block(b, X10, b[4] ? "ly" : "lb"))}
        <polyline class="thin-y" points=${yellow.map((v) => v.toFixed(1)).join(" ")}></polyline>
        <polyline class="lg" points=${pts(g9, X9, Y9) + " " + pts(g10, X10, Y9)}></polyline>
        <rect class="lc" x="2" y="988" width="12" height="2.5"></rect>
        ${l9.map((b) => block(b, X9, b[4] ? "lr" : "lc"))}
        ${l10.map((b) => block(b, X10, b[4] ? "lr" : "lc"))}
        <rect class="lb" x=${X10(1280)} y=${Y9(505)} width="13" height=${Y9(1480) - Y9(505)}></rect>
        <rect class="ly" x=${X10(1390)} y=${Y9(460)} width="13.5" height=${Y9(1480) - Y9(460)}></rect>
        <rect class="lr" x=${X10(1392)} y=${Y9(545)} width="12" height="15"></rect>
        <polyline class="thin-y" points=${pts([1267,468,1280,580], X10, Y9)}></polyline>
        <polyline class="thin-y" points=${pts([1303,790,1380,1478,1390,1390], X10, Y9)}></polyline>
        <line class="thin-y" x1=${X10(1303)} x2=${X10(1390)} y1=${Y9(1478)} y2=${Y9(1478)}></line>
        <text class="f-w" x="1668" y="933">中</text>
        <text class="f-y" x="1669" y="963">立</text>
        <text class="buy" x="536" y="928">买入</text>
        <text class="buy" x="856" y="907">买入</text>
        <text class="buy" x="985" y="918">买入</text>
        <text class="buy" x="1257" y="977">买入</text>

        ${chevron(12, 793, 9)}
        <text class="lg18" x="26" y="793">逆流而上(26,10,30)</text>
        <text class="lg18 f-w" x="190" y="793">大盘线:</text><text class="lg18" x="254" y="793">3187.37</text>${arrow(328, 793, true, "#f02020")}
        <text class="lg18 f-y" x="344" y="793">DM5: 637.47</text>${arrow(454, 793, true, "#f02020")}
        <text class="lg18 f-m" x="470" y="793">个股线: 2916.98</text>${arrow(607, 793, true, "#f02020")}
        <text class="lg18 f-g" x="623" y="793">GM5: 2917.98</text>${arrow(743, 793, false, "#30e6f0")}

        <path class="axis" d="M1711 67V1306M0 781.5H1787M0 1282.5H1787M0 1306H1787"></path>
        ${topAxis.map(([t, y, major]) => svg`<line class="tick" x1="1711" x2=${major ? 1720 : 1715} y1=${y} y2=${y}></line><text class="ax" x="1778" y=${y + (major ? 1 : 3)}>${t}</text>`)}
        ${lowAxis.map(([t, y]) => svg`<line class="tick" x1="1711" x2="1720" y1=${y} y2=${y}></line><line class="tick" x1="1711" x2="1715" y1=${y + 27} y2=${y + 27}></line><text class="ax" x="1778" y=${y + 1}>${t}</text>`)}
        <rect x="1712" y="671" width="75" height="24" fill="#00007a"></rect>
        <text x="1714" y="683" class="f-w">16.54</text>

        ${dateTicks.map((x) => svg`<line class="tick" x1=${x} x2=${x} y1="1283" y2="1288"></line>`)}
        <text class="date" x="8" y="1295">2022年</text>
        ${dateLabels.map(([t, x]) => svg`<line class="tick" x1=${x} x2=${x} y1="1283" y2="1306"></line><text class="date" x=${x + 3} y="1295">${t}</text>`)}
        <rect x="547" y="1283.5" width="116" height="22" fill="#000088"></rect>
        <text class="dsel" x="549" y="1295">2022/08/02/二</text>
        <text x="1730" y="1294">日线</text>
      </svg>`;
  }

  private panel() {
    return html`
      <div class="panel">
        <div class="title"><b>西藏城投</b><span class="code">600773</span><sup>R</sup></div>
        <div class="quote"><span>20.40</span><span>▲0.80</span><span>4.08%</span></div>
        <div class="book a">
          ${sells.map((r, i) => html`<div class="orow"><span class="lb2">${r[0]}${i === 0 ? html`<span class="yen">￥</span>` : ""}</span><span class="p">${r[1]}</span><span class="v">${r[2]}<span class="wan">万</span></span><span></span></div>`)}
        </div>
        <div class="book b">
          ${buys.map((r) => html`<div class="orow"><span class="lb2">${r[0]}</span><span class="p">${r[1]}</span><span class="v">${r[2]}<span class="wan">万</span></span><span class="d ${r[3] === "+5" ? "re" : "gr"}">${r[3]}</span></div>`)}
        </div>
        <div class="sec">
          ${stats1.map((r) => html`<div class="srow big"><div><span class="k">${r[0]}</span><span class="val ${r[2]}">${value(r[1])}</span></div><div><span class="k">${r[3]}</span><span class="val ${r[5]}">${value(r[4])}</span></div></div>`)}
        </div>
        <div class="sec s2">
          ${stats2.map((r) => html`<div class="srow mid"><div><span class="k">${key(r[0])}</span><span class="val ${r[2]}">${value(r[1])}</span></div><div><span class="k">${key(r[3])}</span><span class="val ${r[5]}">${value(r[4])}</span></div></div>`)}
        </div>
        <div class="sec s3">
          ${flow.map((r) => html`<div class="frow"><span class="k">${r[0]}</span><span class="cell"><div class="bar ${r[4]}" style="width:${r[1]}px"></div></span><span class="r mv ${r[4]}">${r[2]}<span class="wan">万</span></span><span class="r ${r[4]}">${r[3]}</span></div>`)}
        </div>
        ${trades.map((r) => html`<div class="trow"><span class="tt">${r[0]}</span><span class="tp">${r[1]}</span><span class="tv">${r[2]}<span class="wan">万</span></span><span></span><span class=${r[3] === "S" ? "gr" : "re"}>${r[3]}</span><span class="ct">${r[4]}</span></div>`)}
      </div>`;
  }

  private side() {
    return html`
      <div class="side">
        ${icons.map((ic) => ic === null
          ? html`<div class="ssep"><i></i></div>`
          : html`<div class="sitem"><svg viewBox="0 0 26 26">${ic}</svg></div>`)}
        ${sideLabels.map((t) => html`<div class="sitem ${/\d|N/.test(t) ? "" : "cjk"} ${t === "日" ? "sel" : ""}">${t}</div>`)}
      </div>`;
  }

  private status() {
    const rows = statusItems.map((it, i) => {
      const next = i + 1 < statusItems.length ? statusItems[i + 1][1] : 1460;
      const w = next - it[1];
      const m = it[0].match(/^(.*)亿$/);
      return html`<span class=${it[2]} style="width:${w}px">${it[2] === "sep" ? html`<i></i>` : m ? html`${m[1]}<em>亿</em>` : it[0]}</span>`;
    });
    return html`<div class="status"><span class="gold"><i></i></span>${rows}</div>`;
  }

  render() {
    const lat = (t: string) => (/^[-A-Z0-9]+$/.test(t) ? "lat" : "");
    return html`
      <div class="app">
        <div class="menubar">
          <svg class="logo" viewBox="0 0 25 25"><rect width="25" height="25" rx="2" fill="#e02020"></rect><path d="M20 3C14 9 9 9 5 15L11 13L6 22C13 19 17 13 20 3Z" fill="#fff"></path></svg>
          <span class="brand">通达信金融终端</span>
          <div class="nav">
            ${["行情","市场","资讯","数据","专题"].map((t) => html`<span>${t}</span>`)}
            <span>发现<i class="dot"></i></span>
            ${["交易","行业","热点"].map((t) => html`<span>${t}</span>`)}
            <span class="lat">L1L2</span>
          </div>
          <span class="alert first">交易未登录</span>
          <span class="alert second">西藏城投</span>
          <div class="menu-right">
            <div class="fn">${["功能","版面","公式","选项","帮助"].map((t) => html`<span>${t}</span>`)}</div>
            <div class="clock"><span class="time">10:46:49</span><span>周五</span></div>
            <div class="winbtn">
              <svg viewBox="0 0 24 24"><path d="M15 4L8 12L15 20" stroke="#333" stroke-width="3" fill="none"></path></svg>
              <svg viewBox="0 0 24 24"><path d="M6 12H20" stroke="#333" stroke-width="3"></path></svg>
              <svg viewBox="0 0 24 24"><path d="M9 8V4H20V15H16" stroke="#222" stroke-width="2.4" fill="none"></path><rect x="4" y="9" width="11" height="11" stroke="#222" stroke-width="3" fill="none"></rect></svg>
              <svg viewBox="0 0 24 24"><path d="M5 4L19 20M19 4L5 20" stroke="#333" stroke-width="3"></path></svg>
            </div>
          </div>
        </div>
        <div class="body">
          <div class="left">
            <div class="toolbar">
              <div class="tg"><i></i></div>
              <div class="periods">
                ${["分时","1分钟","5分钟","15分钟","30分钟","60分钟"].map((t) => html`<span>${t}</span>`)}
                <span class="on">日线</span>
                ${["周线","月线","多周期","更多"].map((t) => html`<span>${t}</span>`)}
                <svg viewBox="0 0 12 18"><path d="M3 3L10 9L3 15" stroke="#b4b4b4" stroke-width="1.3" fill="none"></path></svg>
              </div>
              <div class="tools">${["复权","叠加","统计","画线","F10","标记","-自选","返回"].map((t) => html`<span class=${lat(t)}>${t}</span>`)}</div>
            </div>
            ${this.chart()}
            <div class="tabs r1">${tabs1.map(([t, w, c]) => html`<span class="${c || ""} ${lat(t)}" style="width:${w}px">${t}</span>`)}</div>
            <div class="tabs r2">${tabs2.map(([t, w, c]) => html`<span class=${c || ""} style="width:${w}px">${t}</span>`)}</div>
          </div>
          ${this.panel()}
          ${this.side()}
        </div>
        ${this.status()}
      </div>
      <div class="ime">
        <span class="a">A</span><span class="w">极品五笔</span>
        <span class="m"><svg viewBox="0 0 14 14"><path d="M8 1C4 4 3 9 5 13C9 13 12 10 12 7C10 8 8 6 8 1Z" fill="#111"></path></svg></span>
        <span class="d">·,</span>
        <span class="k"><svg viewBox="0 0 14 14"><rect x="1" y="3" width="12" height="9" fill="#aaa" stroke="#444"></rect><path d="M2 6H12M2 9H12" stroke="#eee" stroke-dasharray="1 1"></path></svg></span>
      </div>
      <div class="wm">
        <span class="cn">公式指标网</span>
        <svg viewBox="-41 -40 82 81">
          <path d="M-34 8A35 35 0 0 1 34 -8" fill="none" stroke="#d8604a" stroke-width="8"></path>
          <path d="M35 2A35 35 0 0 1 -4 35" fill="none" stroke="#edc84a" stroke-width="9"></path>
          <path id="wmarc" d="M-36 10A37 37 0 0 0 -8 36" fill="none"></path>
          <text><textPath href="#wmarc">www.9m8.cn</textPath></text>
          <circle cx="-3" cy="-33" r="4" fill="#edc84a"></circle>
          <rect x="-6" y="-28" width="6" height="6" fill="#edc84a"></rect>
          <path d="M-18 -20H14V-12H4V-6H16V2H-20V-6H-8V-12H-18Z" fill="#edc84a"></path>
          <path d="M-16 8H14V14H4V20H12V26H4V36H-4V26H-14V20H-4V14H-16Z" fill="#edc84a"></path>
        </svg>
        <span class="url">www.9m8.cn</span>
      </div>
    `;
  }
}
